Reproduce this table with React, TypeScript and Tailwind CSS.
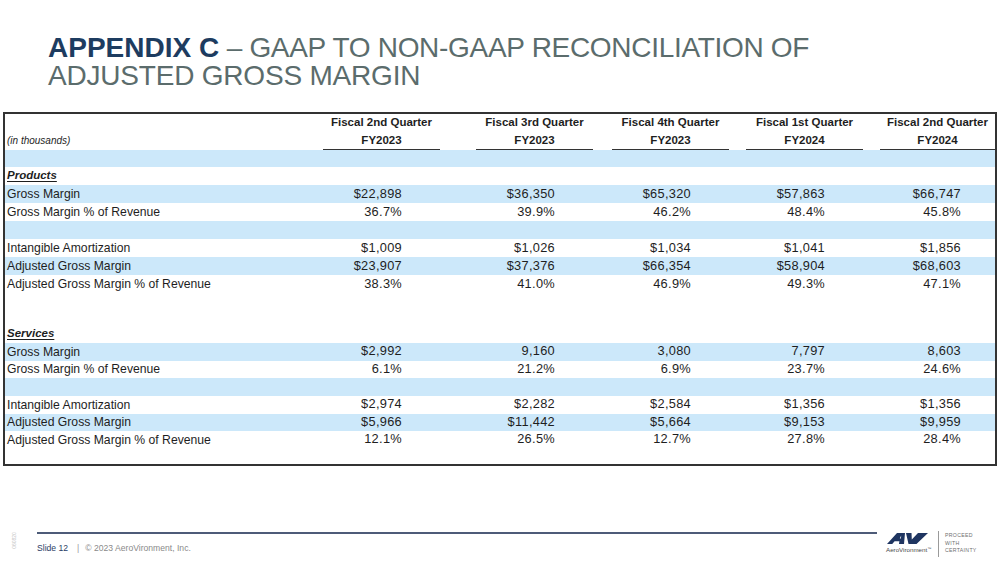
const quarters = [
  { q: "Fiscal 2nd Quarter", fy: "FY2023" },
  { q: "Fiscal 3rd Quarter", fy: "FY2023" },
  { q: "Fiscal 4th Quarter", fy: "FY2023" },
  { q: "Fiscal 1st Quarter", fy: "FY2024" },
  { q: "Fiscal 2nd Quarter", fy: "FY2024" },
];

const sections = [
  {
    name: "Products",
    gm: ["$22,898", "$36,350", "$65,320", "$57,863", "$66,747"],
    gmPct: ["36.7%", "39.9%", "46.2%", "48.4%", "45.8%"],
    amort: ["$1,009", "$1,026", "$1,034", "$1,041", "$1,856"],
    agm: ["$23,907", "$37,376", "$66,354", "$58,904", "$68,603"],
    agmPct: ["38.3%", "41.0%", "46.9%", "49.3%", "47.1%"],
  },
  {
    name: "Services",
    gm: ["$2,992", "9,160", "3,080", "7,797", "8,603"],
    gmPct: ["6.1%", "21.2%", "6.9%", "23.7%", "24.6%"],
    amort: ["$2,974", "$2,282", "$2,584", "$1,356", "$1,356"],
    agm: ["$5,966", "$11,442", "$5,664", "$9,153", "$9,959"],
    agmPct: ["12.1%", "26.5%", "12.7%", "27.8%", "28.4%"],
  },
];

const grid = "grid grid-cols-[318px_153px_136px_134px_134px_1fr] items-center";

function Row({
  label,
  values,
  blue,
  height = "h-[18px]",
}: {
  label?: string;
  values?: string[];
  blue?: boolean;
  height?: string;
}) {
  return (
    <div className={`${grid} ${height} ${blue ? "bg-[#cce8fa]" : "bg-white"}`}>
      <div className="pl-[2px] text-[12.2px] leading-none">{label}</div>
      {(values ?? ["", "", "", "", ""]).map((v, i) => (
        <div key={i} className={i === 4 ? "w-full" : "w-[117px]"}>
          <div
            className={`text-right text-[12.8px] leading-none tracking-[0.3px] ${
              i === 4 ? "pr-[34px]" : "pr-[38px]"
            }`}
          >
            {v}
          </div>
        </div>
      ))}
    </div>
  );
}

function SectionRows({
  s,
  compact,
}: {
  s: (typeof sections)[number];
  compact?: boolean;
}) {
  const h = compact ? "h-[17.5px]" : "h-[18px]";
  return (
    <>
      <div className={`${grid} h-[18px] bg-white`}>
        <div className="pl-[2px] text-[11.5px] font-bold italic underline underline-offset-2 leading-none">
          {s.name}
        </div>
      </div>
      <Row label="Gross Margin" values={s.gm} blue height={h} />
      <Row label="Gross Margin % of Revenue" values={s.gmPct} height={h} />
      <Row blue height="h-[18px]" />
      <Row label="Intangible Amortization" values={s.amort} height={h} />
      <Row label="Adjusted Gross Margin" values={s.agm} blue height={h} />
      <Row label="Adjusted Gross Margin % of Revenue" values={s.agmPct} height={h} />
    </>
  );
}

function Logo() {
  return (
    <div className="flex items-start pt-[3px]">
      <div className="flex flex-col items-start w-[50px]">
        <svg width="41" height="11" viewBox="0 0 41 11" className="ml-[1px]">
          <polygon points="0,11 10,0 18,0 17,11 12,11 12.4,8.2 7.6,8.2 5.2,11" fill="#1f3561" />
          <polygon points="12.8,5.6 14.2,2.4 13.9,5.6" fill="#ffffff" />
          <polygon points="19,0 24.5,0 24.8,6.5 31,0 41,0 29.5,11 21.5,11" fill="#1f3561" />
        </svg>
        <div className="mt-[3px] text-[6.2px] leading-none text-[#4a4a4a] font-['Liberation_Sans',Arial,sans-serif]">
          AeroVironment<span className="text-[4px] align-top">™</span>
        </div>
      </div>
      <div className="ml-[2px] -mt-[2px] h-[26px] w-px bg-[#9a9a9a]" />
      <div className="ml-[6px] flex flex-col gap-[2px] text-[5.2px] leading-[5.5px] tracking-[0.3px] text-[#6f6f6f] font-['Liberation_Sans',Arial,sans-serif]">
        <span>PROCEED</span>
        <span>WITH</span>
        <span>CERTAINTY</span>
      </div>
    </div>
  );
}

export default function App() {
  return (
    <div className="relative flex h-[562px] w-[999px] flex-col overflow-hidden bg-white text-[#1e1e1e] font-['Liberation_Sans',Arial,sans-serif]">
      <h1 className="pl-[48px] pt-[34px] text-[28px] leading-[28px] text-[#5b6c6c]">
        <span className="font-bold text-[#1d3c60]">APPENDIX C</span>
        <span className="tracking-[-0.3px]"> – GAAP TO NON-GAAP RECONCILIATION OF</span>
        <br />
        <span className="tracking-[-0.2px]">ADJUSTED GROSS MARGIN</span>
      </h1>

      <div className="ml-[3px] mt-[22px] w-[994px] border-2 border-[#333333]">
        <div className={`${grid} h-[18px]`}>
          <div />
          {quarters.map((c, i) => (
            <div key={i} className={i === 4 ? "w-full" : "w-[117px]"}>
              <div className="text-center text-[11.5px] font-bold leading-none">{c.q}</div>
            </div>
          ))}
        </div>
        <div className={`${grid} h-[18px]`}>
          <div className="pl-[2px] text-[10px] italic leading-none">(in thousands)</div>
          {quarters.map((c, i) => (
            <div
              key={i}
              className={`${i === 4 ? "w-full" : "w-[117px]"} flex h-full items-center justify-center border-b border-[#333333]`}
            >
              <div className="pt-[1px] text-[11.5px] font-bold leading-none">{c.fy}</div>
            </div>
          ))}
        </div>
        <Row blue height="h-[17px]" />
        <SectionRows s={sections[0]} />
        <Row height="h-[32px]" />
        <SectionRows s={sections[1]} compact />
        <div className="h-[15.5px]" />
      </div>

      <div className="mt-[64px] flex items-start">
        <div className="w-[877px] pl-[37px] pt-[2px]">
          <div className="h-[1.5px] bg-[#4d5b78]" />
          <div className="mt-[10px] flex items-center text-[8.6px] leading-none">
            <span className="text-[#2a3d66]">Slide 12</span>
            <span className="ml-[9px] text-[#9a9a9a]">|</span>
            <span className="ml-[6px] text-[#8a8a8a]">© 2023 AeroVironment, Inc.</span>
          </div>
        </div>
        <div className="ml-[9px]">
          <Logo />
        </div>
      </div>

      <div className="absolute left-[6px] top-[538px] -rotate-90 text-[5px] leading-none text-[#c4c4c4]">
        060820
      </div>
    </div>
  );
}
